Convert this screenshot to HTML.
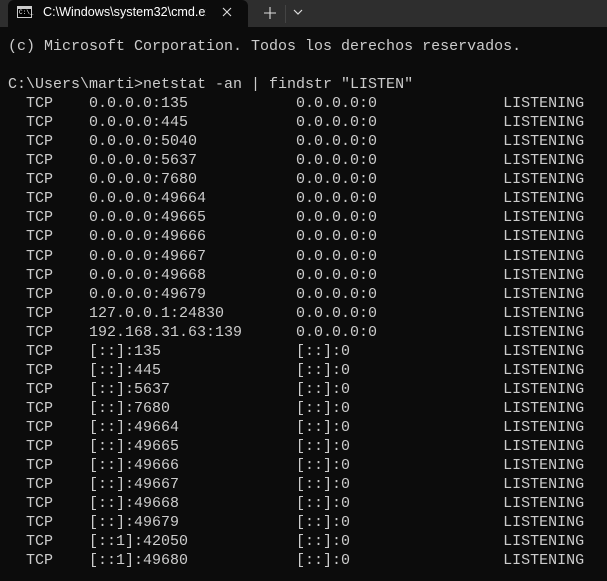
<!DOCTYPE html>
<html><head><meta charset="utf-8"><style>
html,body{margin:0;padding:0;width:607px;height:581px;overflow:hidden;background:#0c0c0c;}
#bar{position:absolute;left:0;top:0;width:607px;height:27px;background:#2e2e2e;}
#tab{position:absolute;left:8px;top:0;width:240px;height:28px;background:#0c0c0c;border-radius:6px 6px 0 0;}
#title{position:absolute;left:43px;top:5px;font:12.6px "Liberation Sans",sans-serif;color:#fff;white-space:nowrap;width:163px;overflow:hidden;}
#icon{position:absolute;left:17px;top:6px;width:15px;height:12px;border:1px solid #ccc;box-sizing:border-box;background:#000;}
#icon:before{content:"";position:absolute;left:0;top:0;right:0;height:2px;background:#ccc;}
#icon span{position:absolute;left:1px;top:2px;font:6px "Liberation Mono",monospace;color:#fff;}
#close{position:absolute;left:222px;top:7px;}
#plus{position:absolute;left:264px;top:7px;}
#sep{position:absolute;left:285px;top:5px;width:1px;height:18px;background:#444;}
#chev{position:absolute;left:293px;top:8px;}
pre{position:absolute;left:8px;top:37px;margin:0;font:15px/19.05px "Liberation Mono",monospace;color:#cccccc;}
</style></head><body>
<div id="bar"></div>
<div id="tab"></div>
<div id="icon"><span>C:\_</span></div>
<div id="title">C:\Windows\system32\cmd.exe</div>
<svg id="close" width="10" height="10" viewBox="0 0 10 10"><path d="M1 1 L9 9 M9 1 L1 9" stroke="#ddd" stroke-width="1.1"/></svg>
<svg id="plus" width="12" height="12" viewBox="0 0 12 12"><path d="M6 0 V12 M0 6 H12" stroke="#ddd" stroke-width="1.1"/></svg>
<div id="sep"></div>
<svg id="chev" width="10" height="8" viewBox="0 0 10 8"><path d="M1 2 L5 6 L9 2" stroke="#ddd" stroke-width="1.2" fill="none"/></svg>
<pre>(c) Microsoft Corporation. Todos los derechos reservados.

C:\Users\marti&gt;netstat -an | findstr "LISTEN"
  TCP    0.0.0.0:135            0.0.0.0:0              LISTENING
  TCP    0.0.0.0:445            0.0.0.0:0              LISTENING
  TCP    0.0.0.0:5040           0.0.0.0:0              LISTENING
  TCP    0.0.0.0:5637           0.0.0.0:0              LISTENING
  TCP    0.0.0.0:7680           0.0.0.0:0              LISTENING
  TCP    0.0.0.0:49664          0.0.0.0:0              LISTENING
  TCP    0.0.0.0:49665          0.0.0.0:0              LISTENING
  TCP    0.0.0.0:49666          0.0.0.0:0              LISTENING
  TCP    0.0.0.0:49667          0.0.0.0:0              LISTENING
  TCP    0.0.0.0:49668          0.0.0.0:0              LISTENING
  TCP    0.0.0.0:49679          0.0.0.0:0              LISTENING
  TCP    127.0.0.1:24830        0.0.0.0:0              LISTENING
  TCP    192.168.31.63:139      0.0.0.0:0              LISTENING
  TCP    [::]:135               [::]:0                 LISTENING
  TCP    [::]:445               [::]:0                 LISTENING
  TCP    [::]:5637              [::]:0                 LISTENING
  TCP    [::]:7680              [::]:0                 LISTENING
  TCP    [::]:49664             [::]:0                 LISTENING
  TCP    [::]:49665             [::]:0                 LISTENING
  TCP    [::]:49666             [::]:0                 LISTENING
  TCP    [::]:49667             [::]:0                 LISTENING
  TCP    [::]:49668             [::]:0                 LISTENING
  TCP    [::]:49679             [::]:0                 LISTENING
  TCP    [::1]:42050            [::]:0                 LISTENING
  TCP    [::1]:49680            [::]:0                 LISTENING</pre>
</body></html>
